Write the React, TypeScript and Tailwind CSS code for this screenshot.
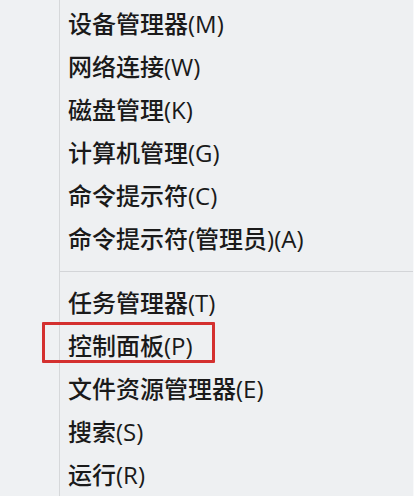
const groupA = [
  "设备管理器(M)",
  "网络连接(W)",
  "磁盘管理(K)",
  "计算机管理(G)",
  "命令提示符(C)",
  "命令提示符(管理员)(A)",
];

const groupB = [
  "任务管理器(T)",
  "控制面板(P)",
  "文件资源管理器(E)",
  "搜索(S)",
  "运行(R)",
];

function Item({ label }: { label: string }) {
  return (
    <div className="h-[43px] flex items-center pl-[8px] text-[24px] font-medium text-[#1a1a1a] whitespace-nowrap">
      {label}
    </div>
  );
}

export default function App() {
  return (
    <div
      className="relative w-[414px] h-[496px] overflow-hidden bg-[#eef0f2] flex"
      style={{ fontFamily: '"Open Sans", "Noto Sans CJK SC", sans-serif' }}
    >
      <div className="w-[60px] shrink-0 border-r border-[#d6d8da] bg-[#eff1f3]" />
      <div className="flex-1 flex flex-col pt-[2px] border-r border-[#f8f9fa]">
        {groupA.map((label) => (
          <Item key={label} label={label} />
        ))}
        <div className="mt-[11px] mb-[9px] h-px bg-[#d3d5d8]" />
        {groupB.map((label) => (
          <Item key={label} label={label} />
        ))}
      </div>
      {/* red highlight around 控制面板 */}
      <div className="absolute left-[42px] top-[322px] w-[173px] h-[41px] border-[3px] border-[#d4302f] rounded-[1px]" />
    </div>
  );
}
